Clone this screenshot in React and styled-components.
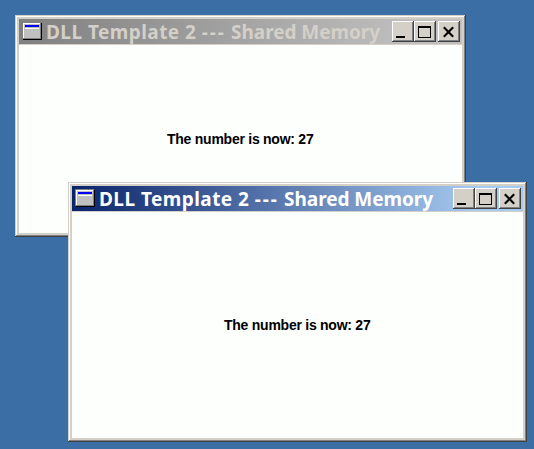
import React from 'react';
import styled, { createGlobalStyle } from 'styled-components';

const GlobalStyle = createGlobalStyle`
  * { box-sizing: border-box; }
  body { margin: 0; background: #3a6ea5; overflow: hidden; }
`;

const Desktop = styled.main`
  position: relative;
  width: 534px;
  height: 449px;
  overflow: hidden;
  background: #3a6ea5;
`;

const Frame = styled.section`
  position: absolute;
  left: ${(p) => p.$x}px;
  top: ${(p) => p.$y}px;
  width: ${(p) => p.$w}px;
  height: ${(p) => p.$h}px;
  display: flex;
  flex-direction: column;
  padding: 4px;
  background: #d4d0c8;
  box-shadow:
    inset -1px -1px #404040,
    inset 1px 1px #d4d0c8,
    inset -2px -2px #808080,
    inset 2px 2px #ffffff;
`;

const TitleBar = styled.header`
  display: flex;
  align-items: center;
  flex: none;
  height: 25px;
  margin-bottom: 1px;
  padding: 0 2px 0 3px;
  background: ${(p) =>
    p.$active
      ? 'linear-gradient(90deg, #0a246a, #a6caf0 90%)'
      : 'linear-gradient(90deg, #808080, #c0c0c0 90%)'};
`;

const Title = styled.h1`
  flex: 1;
  min-width: 0;
  margin: 0 0 0 3px;
  padding: 1px 0 0 1px;
  white-space: nowrap;
  font: bold 19px/26px 'Noto Sans', sans-serif;
  letter-spacing: 0.45px;
  color: ${(p) => (p.$active ? '#ffffff' : '#d4d0c8')};
`;

const Dashes = styled.span`
  letter-spacing: 1.9px;
`;

const Suffix = styled.span`
  letter-spacing: -0.05px;
`;

const Controls = styled.div`
  display: flex;
  flex: none;
`;

const ControlButton = styled.button`
  width: 22px;
  height: 21px;
  padding: 0;
  border: 0;
  margin-left: ${(p) => (p.$gap ? 2 : 0)}px;
  background: #d4d0c8;
  box-shadow:
    inset -1px -1px #404040,
    inset 1px 1px #ffffff,
    inset -2px -2px #808080;

  svg { display: block; }
`;

const Client = styled.div`
  flex: 1;
  padding: ${(p) => p.$top}px 0 0 ${(p) => p.$left}px;
  background: #fcfffc;
`;

const Message = styled.p`
  margin: 0;
  white-space: nowrap;
  font: bold 14px/18px 'Liberation Sans', Arial, sans-serif;
  letter-spacing: -0.25px;
  color: #000;
`;

const AppIcon = () => (
  <svg width="20" height="19" shapeRendering="crispEdges">
    <path fill="#000" d="M1 1h19v17H1z" />
    <path fill="#808080" d="M0 0h19v17H0z" />
    <path fill="#fff" d="M1 1h17v1H2v14H1z" />
    <path fill="#c0c0c0" d="M2 2h16v14H2z" />
    <path fill="#0000ff" d="M3 3h14v2H3z" />
    <path fill="#fff" d="M3 6h14v1H3z" />
  </svg>
);

const crossPath = 'M5.8 6.3L15.2 15.7M15.2 6.3L5.8 15.7';

const glyphs = {
  Minimize: 'M4 15h9v2H4z',
  Maximize: 'M4 5h13v12H4zM5 7v9h11V7z',
  Close: crossPath,
};

const Glyph = ({ name }) =>
  name === 'Close' ? (
    <svg width="22" height="21">
      <path d={glyphs[name]} stroke="#000" strokeWidth="2.1" />
    </svg>
  ) : (
    <svg width="22" height="21" shapeRendering="crispEdges">
      <path d={glyphs[name]} fill="#000" fillRule="evenodd" />
    </svg>
  );

const AppWindow = ({ x, y, w, h, active, left, top }) => (
  <Frame $x={x} $y={y} $w={w} $h={h}>
    <TitleBar $active={active}>
      <AppIcon />
      <Title $active={active}>
        DLL Template 2 <Dashes>---</Dashes> <Suffix>Shared Memory</Suffix>
      </Title>
      <Controls>
        {Object.keys(glyphs).map((name) => (
          <ControlButton key={name} aria-label={name} $gap={name === 'Close'}>
            <Glyph name={name} />
          </ControlButton>
        ))}
      </Controls>
    </TitleBar>
    <Client $left={left} $top={top}>
      <Message>The number is now: 27</Message>
    </Client>
  </Frame>
);

export default function App() {
  return (
    <>
      <GlobalStyle />
      <Desktop>
        <AppWindow x={15} y={15} w={451} h={222} left={148} top={85} />
        <AppWindow x={68} y={182} w={459} h={260} left={152} top={104} active />
      </Desktop>
    </>
  );
}
